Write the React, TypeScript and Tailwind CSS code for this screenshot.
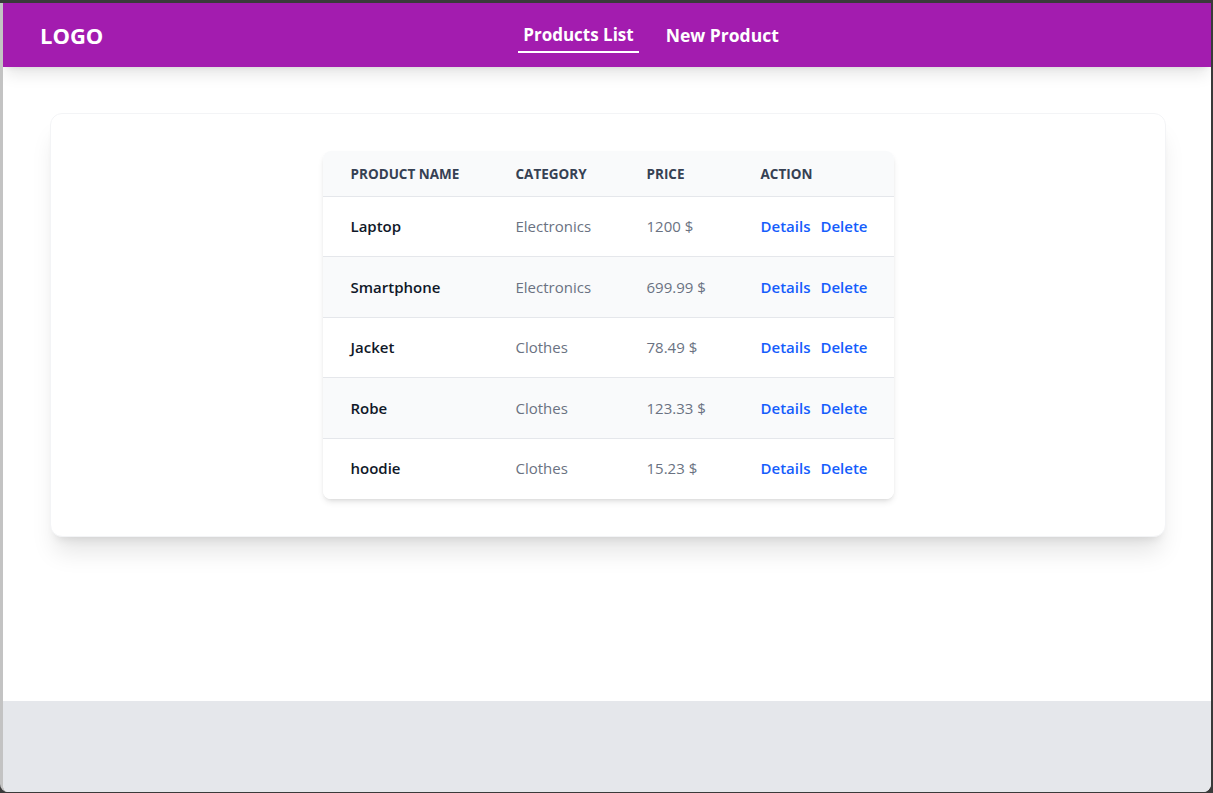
const products = [
  { name: "Laptop", category: "Electronics", price: "1200" },
  { name: "Smartphone", category: "Electronics", price: "699.99" },
  { name: "Jacket", category: "Clothes", price: "78.49" },
  { name: "Robe", category: "Clothes", price: "123.33" },
  { name: "hoodie", category: "Clothes", price: "15.23" },
];

const Navbar = () => {
  return (
    <nav className="relative z-10 flex h-16 items-center bg-[#a31caf] px-[37px] shadow-lg">
      <div className="w-[88px] text-[22px] font-bold text-white">LOGO</div>
      <div className="flex flex-1 items-center justify-center gap-[22px]">
        <a className="border-b-2 border-white px-[5px] pb-[3px] pt-[5px] text-[17px] font-bold text-white">
          Products List
        </a>
        <a className="border-b-2 border-transparent px-[5px] pb-[3px] pt-[5px] text-[17.5px] font-bold text-white">
          New Product
        </a>
      </div>
    </nav>
  );
};

const ProductsTable = () => {
  return (
    <div className="overflow-hidden rounded-lg shadow-md">
      <table className="w-[571px] table-fixed text-left">
        <thead className="bg-gray-50">
          <tr className="h-[45px] text-[13.5px] font-bold uppercase text-gray-700">
            <th className="w-[165px] px-7 pt-[2px]">Product Name</th>
            <th className="w-[131px] px-7 pt-[2px]">Category</th>
            <th className="w-[114px] px-7 pt-[2px]">Price</th>
            <th className="w-[161px] px-7 pt-[2px]">Action</th>
          </tr>
        </thead>
        <tbody className="whitespace-nowrap text-[15px]">
          {products.map((p, i) => (
            <tr
              key={p.name}
              className={`h-[60.5px] border-t border-gray-200 ${
                i % 2 === 1 ? "bg-gray-50" : "bg-white"
              }`}
            >
              <td className="px-7 font-semibold text-gray-900">{p.name}</td>
              <td className="px-7 text-gray-500">{p.category}</td>
              <td className="px-7 text-gray-500">{p.price} $</td>
              <td className="px-7 font-semibold text-blue-600">
                <a className="mr-[10px]">Details</a>
                <a>Delete</a>
              </td>
            </tr>
          ))}
        </tbody>
      </table>
    </div>
  );
};

export default function App() {
  return (
    <div
      className="flex h-screen flex-col bg-[#3a3a3a] pb-px pr-[2px] pt-[3px]"
      style={{ fontFamily: '"Open Sans", "Noto Sans", sans-serif' }}
    >
      <div className="flex flex-1 flex-col overflow-hidden rounded-b-lg border-l-[3px] border-[#c3c3c3] bg-white">
        <Navbar />
        <main className="h-[634px] pl-[47px] pr-[45px] pt-[46px]">
          <div className="flex justify-center rounded-xl border border-gray-100 bg-white py-[37px] shadow-xl">
            <ProductsTable />
          </div>
        </main>
        <footer className="flex-1 bg-gray-200" />
      </div>
    </div>
  );
}
